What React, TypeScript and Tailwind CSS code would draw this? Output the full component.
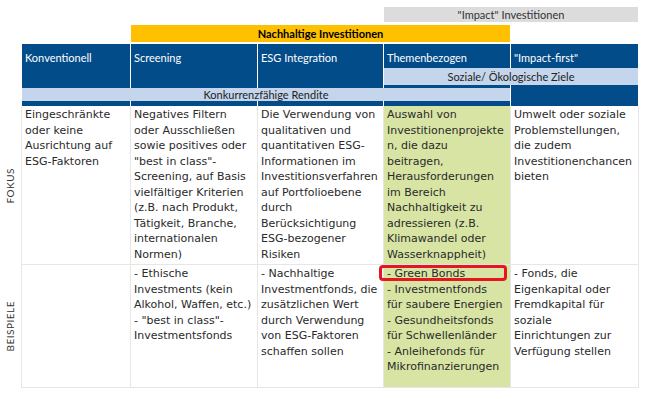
import React from "react";

const fokus: string[][] = [
    ["Eingeschränkte", "oder keine", "Ausrichtung auf", "ESG-Faktoren"],
    [
        "Negatives Filtern",
        "oder Ausschließen",
        "sowie positives oder",
        "\"best in class\"-",
        "Screening, auf Basis",
        "vielfältiger Kriterien",
        "(z.B. nach Produkt,",
        "Tätigkeit, Branche,",
        "internationalen",
        "Normen)",
    ],
    [
        "Die Verwendung von",
        "qualitativen und",
        "quantitativen ESG-",
        "Informationen im",
        "Investitionsverfahren",
        "auf Portfolioebene",
        "durch",
        "Berücksichtigung",
        "ESG-bezogener",
        "Risiken",
    ],
    [
        "Auswahl von",
        "Investitionenprojekte",
        "n, die dazu",
        "beitragen,",
        "Herausforderungen",
        "im Bereich",
        "Nachhaltigkeit zu",
        "adressieren (z.B.",
        "Klimawandel oder",
        "Wasserknappheit)",
    ],
    ["Umwelt oder soziale", "Problemstellungen,", "die zudem", "Investitionenchancen", "bieten"],
];

const beispiele: string[][] = [
    [],
    ["- Ethische", "Investments (kein", "Alkohol, Waffen, etc.)", "- \"best in class\"-", "Investmentsfonds"],
    ["- Nachhaltige", "Investmentfonds, die", "zusätzlichen Wert", "durch Verwendung", "von ESG-Faktoren", "schaffen sollen"],
    [
        "- Green Bonds",
        "- Investmentfonds",
        "für saubere Energien",
        "- Gesundheitsfonds",
        "für Schwellenländer",
        "- Anleihefonds für",
        "Mikrofinanzierungen",
    ],
    ["- Fonds, die", "Eigenkapital oder", "Fremdkapital für", "soziale", "Einrichtungen zur", "Verfügung stellen"],
];

const headers = ["Konventionell", "Screening", "ESG Integration"];

function Lines({ lines }: { lines: string[] }) {
    return (
        <>
            {lines.map((l, i) => (
                <div key={i} className="whitespace-nowrap">
                    {l}
                </div>
            ))}
        </>
    );
}

function BodyRow({ rows, green, className, highlight }: { rows: string[][]; green: number; className: string; highlight?: boolean }) {
    return (
        <>
            {rows.map((lines, i) => (
                <div
                    key={i}
                    className={`relative pl-[3px] ${className} ${i === green ? "bg-[#d7e4a3]" : "bg-white"}`}
                >
                    <Lines lines={lines} />
                    {highlight && i === green && (
                        <div className="absolute left-[-5px] top-0 w-[128px] h-[16px] border-[3px] border-[#e5161d] rounded-[4px] z-10" />
                    )}
                </div>
            ))}
        </>
    );
}

export default function App() {
    return (
        <div className="w-[650px] h-[399px] bg-white pt-[7px] overflow-hidden font-['Lato',sans-serif]">
            {/* top bands */}
            <div className="ml-[22px] w-[516px] grid grid-cols-[108px_126px_125px_126px_127px] gap-x-px">
                <div className="col-start-4 col-span-2 h-[15px] bg-[#dcdcdc] flex items-center justify-center text-[11px] text-[#333] leading-none">
                    "Impact" Investitionen
                </div>
                <div className="col-start-2 col-span-3 mt-[3px] h-[17px] bg-[#ffc000] flex items-center justify-center text-[11px] font-bold text-black leading-none">
                    Nachhaltige Investitionen
                </div>
            </div>

            {/* blue header */}
            <div className="mt-[2px] ml-[22px] w-[516px] grid grid-cols-[108px_126px_125px_126px_127px] grid-rows-[24px_17px_3px_13px_5px] gap-x-px text-[11px] leading-[13px]">
                {headers.map((h, i) => (
                    <div key={h} className="row-span-3 bg-[#034c8a] text-white pt-[7px] pl-[3px]" style={{ gridColumnStart: i + 1 }}>
                        {h}
                    </div>
                ))}
                <div className="col-start-4 row-start-1 bg-[#034c8a] text-white pt-[7px] pl-[3px]">Themenbezogen</div>
                <div className="col-start-5 row-start-1 bg-[#034c8a] text-white pt-[7px] pl-[3px]">"Impact-first"</div>
                <div className="col-start-4 col-span-2 row-start-2 bg-[#c4d5ec] text-[#222] flex items-center justify-center">
                    Soziale/ Ökologische Ziele
                </div>
                <div className="col-start-4 row-start-3 bg-[#034c8a]" />
                <div className="col-start-5 row-start-3 row-span-3 bg-[#034c8a]" />
                <div className="col-start-1 col-span-4 row-start-4 bg-[#c4d5ec] text-[#222] flex items-center justify-center">
                    Konkurrenzfähige Rendite
                </div>
                <div className="col-start-1 row-start-5 bg-[#034c8a]" />
                <div className="col-start-2 row-start-5 bg-[#034c8a]" />
                <div className="col-start-3 row-start-5 bg-[#034c8a]" />
                <div className="col-start-4 row-start-5 bg-[#034c8a]" />
            </div>

            {/* body */}
            <div className="flex">
                <div className="w-[21px] flex flex-col text-[10px] text-[#333]">
                    <div className="h-[159px] flex items-center justify-center">
                        <span className="[writing-mode:vertical-rl] rotate-180 tracking-[0.5px]">FOKUS</span>
                    </div>
                    <div className="h-[123px] flex items-center justify-center">
                        <span className="[writing-mode:vertical-rl] rotate-180 tracking-[0.5px]">BEISPIELE</span>
                    </div>
                </div>
                <div className="bg-[#e6e6e6] pl-px pr-px pb-px">
                    <div className="grid grid-cols-[108px_126px_125px_126px_127px] grid-rows-[158px_122px] gap-px font-['DejaVu_Sans',sans-serif] text-[11px] leading-[15.55px] text-[#2a2a2a]">
                        <BodyRow rows={fokus} green={3} className="pt-px" />
                        <BodyRow rows={beispiele} green={3} className="pt-px" highlight />
                    </div>
                </div>
            </div>
        </div>
    );
}
